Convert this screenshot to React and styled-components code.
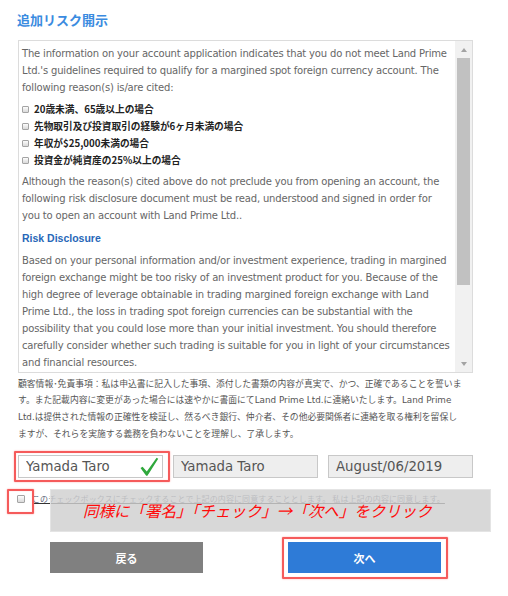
import React from "react";
import styled, { createGlobalStyle } from "styled-components";

const GlobalStyle = createGlobalStyle`
  html, body { margin: 0; padding: 0; background: #fff; }
  body {
    width: 508px;
    height: 596px;
    overflow: hidden;
    font-family: "DejaVu Sans", "Noto Sans CJK JP", sans-serif;
  }
  * { box-sizing: border-box; }
`;

const Page = styled.div`
  width: 508px;
  padding: 10px 35px 0 18px;
`;

const Title = styled.h2`
  margin: 0 0 10px -1px;
  font-family: "Noto Sans CJK JP", sans-serif;
  font-size: 13px;
  line-height: 20px;
  font-weight: 700;
  color: #3a8be0;
`;

const DisclosureBox = styled.div`
  display: flex;
  height: 333px;
  border: 1px solid #dcdcdc;
  overflow: hidden;
`;

const BoxContent = styled.div`
  flex: 1;
  padding: 3.5px 3px 0 3px;
  overflow: hidden;
  font-family: "DejaVu Sans", "Noto Sans CJK JP", sans-serif;
  font-size: 10px;
  letter-spacing: -0.17px;
  line-height: 17px;
  color: #666;
`;

const Para = styled.p`
  margin: 0 0 ${(p) => p.$mb || 0}px;
`;

const Reasons = styled.div`
  display: flex;
  flex-direction: column;
  margin: 0 0 ${(p) => p.$mb || 0}px;
`;

const Reason = styled.div`
  display: flex;
  align-items: center;
  gap: 5px;
  font-family: "Noto Sans CJK JP", sans-serif;
  font-size: 9.7px;
  letter-spacing: 0;
  font-weight: 700;
  line-height: 17px;
  color: #222;
`;

const MiniBox = styled.span`
  display: inline-block;
  flex: none;
  width: ${(p) => p.$size || 7}px;
  height: ${(p) => p.$size || 7}px;
  border: 1px solid #a4a4a4;
  border-radius: 1px;
  background: linear-gradient(#fdfdfd, #d9d9d9);
`;

const SectionHeading = styled.h3`
  margin: 0 0 5px;
  font-family: "Liberation Sans", sans-serif;
  font-size: 10.5px;
  letter-spacing: 0;
  line-height: 17px;
  font-weight: 700;
  color: #2767b8;
`;

const ScrollTrack = styled.div`
  flex: none;
  width: 17px;
  display: flex;
  flex-direction: column;
  background: #f1f1f1;
`;

const ScrollArrow = styled.div`
  height: 17px;
  display: flex;
  align-items: center;
  justify-content: center;
  &::before {
    content: "";
    width: 0;
    height: 0;
    border-left: 3.5px solid transparent;
    border-right: 3.5px solid transparent;
    ${(p) =>
      p.$down
        ? "border-top: 4px solid #a3a3a3;"
        : "border-bottom: 4px solid #a3a3a3;"}
  }
`;

const ScrollThumb = styled.div`
  height: 227px;
  margin: 0 2px;
  background: #c1c1c1;
`;

const ScrollRest = styled.div`
  flex: 1;
`;

const Disclaimer = styled.p`
  margin: 2.6px 0 0;
  font-family: "DejaVu Sans", "Noto Sans CJK JP", sans-serif;
  font-size: 8.8px;
  line-height: 16.7px;
  color: #555;
  white-space: nowrap;
`;

const FieldRow = styled.div`
  display: grid;
  grid-template-columns: repeat(3, 1fr);
  column-gap: 10px;
  margin-top: 12.6px;
`;

const FieldWrap = styled.div`
  position: relative;
`;

const Field = styled.input`
  display: block;
  width: 100%;
  height: 23px;
  margin: 0;
  padding: 0 7px;
  border: 1px solid #c8c8c8;
  border-radius: 0;
  outline: none;
  background: ${(p) => (p.$filled ? "#eeeeee" : "#ffffff")};
  font-family: "DejaVu Sans", sans-serif;
  font-size: 13.3px;
  color: #555;
`;

const CheckMark = styled.svg`
  position: absolute;
  top: 2px;
  right: 4px;
  width: 20px;
  height: 20px;
`;

const Highlight = styled.div`
  position: absolute;
  top: ${(p) => p.$t}px;
  left: ${(p) => p.$l}px;
  right: ${(p) => p.$r}px;
  bottom: ${(p) => p.$b}px;
  border: 2px solid #f55b5b;
  border-radius: 1px;
  box-shadow: 0 0 1.5px rgba(255, 60, 60, 0.6), inset 0 0 1px rgba(255, 60, 60, 0.4);
  pointer-events: none;
`;

const AgreeRow = styled.div`
  position: relative;
  display: flex;
  align-items: flex-start;
  height: 25px;
  margin-top: 11px;
`;

const AgreeBoxWrap = styled.div`
  position: relative;
  margin: 6px 0 0 -1px;
  width: 8px;
  height: 8px;
  display: flex;
`;

const AgreeLabel = styled.span`
  margin: 5px 0 0 7px;
  font-family: "Noto Sans CJK JP", sans-serif;
  font-size: 8px;
  letter-spacing: 0.1px;
  line-height: 10px;
  color: #5c6478;
  text-decoration: underline;
  text-decoration-color: #333;
  white-space: nowrap;
`;

const Annotation = styled.div`
  position: absolute;
  left: 32px;
  top: 0;
  width: 441px;
  height: 43px;
  display: flex;
  align-items: center;
  padding: 0 0 2px 32px;
  background: rgba(208, 208, 208, 0.82);
  border: 1px solid rgba(230, 230, 230, 0.9);
`;

const AnnotationText = styled.span`
  font-family: "Noto Sans CJK JP", sans-serif;
  font-size: 15.5px;
  font-style: italic;
  font-weight: 400;
  color: #ff0a0a;
  white-space: nowrap;
  letter-spacing: 0;
`;

const ButtonRow = styled.div`
  display: flex;
  justify-content: center;
  gap: 85px;
  margin-top: 28px;
`;

const ButtonWrap = styled.div`
  position: relative;
`;

const Button = styled.button`
  display: flex;
  align-items: center;
  justify-content: center;
  width: 153px;
  height: 31px;
  margin: 0;
  padding: 0;
  border: none;
  border-radius: 0;
  background: ${(p) => (p.$primary ? "#2e7bd7" : "#808080")};
  color: #fff;
  font-family: "Noto Sans CJK JP", sans-serif;
  font-size: 11px;
  font-weight: 700;
`;

const reasons = [
  "20歳未満、65歳以上の場合",
  "先物取引及び投資取引の経験が6ヶ月未満の場合",
  "年収が$25,000未満の場合",
  "投資金が純資産の25%以上の場合",
];

export default function App() {
  return (
    <>
      <GlobalStyle />
      <Page>
        <Title>追加リスク開示</Title>
        <DisclosureBox>
          <BoxContent>
            <Para $mb={5}>
              The information on your account application indicates that you do not meet Land
              Prime Ltd.'s guidelines required to qualify for a margined spot foreign currency
              account. The following reason(s) is/are cited:
            </Para>
            <Reasons $mb={4}>
              {reasons.map((r) => (
                <Reason key={r}>
                  <MiniBox />
                  {r}
                </Reason>
              ))}
            </Reasons>
            <Para $mb={6}>
              Although the reason(s) cited above do not preclude you from opening an account, the
              following risk disclosure document must be read, understood and signed in order for
              you to open an account with Land Prime Ltd..
            </Para>
            <SectionHeading>Risk Disclosure</SectionHeading>
            <Para>
              Based on your personal information and/or investment experience, trading in margined
              foreign exchange might be too risky of an investment product for you. Because of the
              high degree of leverage obtainable in trading margined foreign exchange with Land
              Prime Ltd., the loss in trading spot foreign currencies can be substantial with the
              possibility that you could lose more than your initial investment. You should
              therefore carefully consider whether such trading is suitable for you in light of
              your circumstances and financial resources.
            </Para>
          </BoxContent>
          <ScrollTrack>
            <ScrollArrow />
            <ScrollThumb />
            <ScrollRest />
            <ScrollArrow $down />
          </ScrollTrack>
        </DisclosureBox>

        <Disclaimer>
          顧客情報･免責事項：私は申込書に記入した事項、添付した書類の内容が真実で、かつ、正確であることを誓いま
          <br />
          す。また記載内容に変更があった場合には速やかに書面にてLand Prime Ltd.に連絡いたします。Land Prime
          <br />
          Ltd.は提供された情報の正確性を検証し、然るべき銀行、仲介者、その他必要関係者に連絡を取る権利を留保し
          <br />
          ますが、それらを実施する義務を負わないことを理解し、了承します。
        </Disclaimer>

        <FieldRow>
          <FieldWrap>
            <Field readOnly defaultValue="Yamada Taro" />
            <CheckMark viewBox="0 0 20 20">
              <path
                d="M1.5 11 L3.6 9.8 L7.8 14.6 L17.6 0.8 L19.2 1.8 L8.4 18.8 L7.2 18.8 Z"
                fill="#2fa83c"
              />
            </CheckMark>
            <Highlight $t={-4} $l={-4} $r={-7} $b={-4} />
          </FieldWrap>
          <FieldWrap>
            <Field $filled readOnly defaultValue="Yamada Taro" />
          </FieldWrap>
          <FieldWrap>
            <Field $filled readOnly defaultValue="August/06/2019" />
          </FieldWrap>
        </FieldRow>

        <AgreeRow>
          <AgreeBoxWrap>
            <MiniBox $size={8} />
            <Highlight $t={-6} $l={-10} $r={-9} $b={-11} />
          </AgreeBoxWrap>
          <AgreeLabel>
            このチェックボックスにチェックすることで上記の内容に同意することとします。 私は上記の内容に同意します。
          </AgreeLabel>
          <Annotation>
            <AnnotationText>同様に「署名」「チェック」→「次へ」をクリック</AnnotationText>
          </Annotation>
        </AgreeRow>

        <ButtonRow>
          <ButtonWrap>
            <Button>戻る</Button>
          </ButtonWrap>
          <ButtonWrap>
            <Button $primary>次へ</Button>
            <Highlight $t={-5} $l={-6} $r={-7} $b={-6} />
          </ButtonWrap>
        </ButtonRow>
      </Page>
    </>
  );
}
